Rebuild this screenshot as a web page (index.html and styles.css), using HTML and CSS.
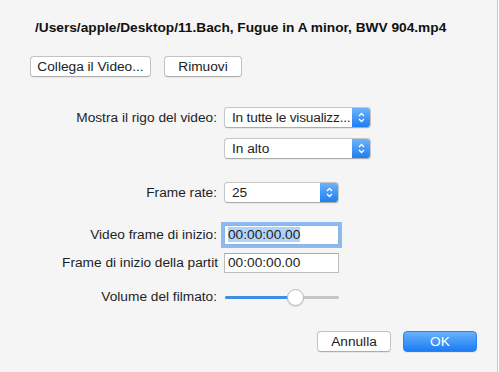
FILE: index.html
```html
<!DOCTYPE html>
<html lang="it">
  <head>
    <meta charset="UTF-8" />
    <meta name="viewport" content="width=device-width, initial-scale=1.0" />
    <title>Video</title>
    <link rel="stylesheet" href="styles.css">
  </head>
  <body>
    <div class="dialog">
      <div class="file-path">/Users/apple/Desktop/11.Bach, Fugue in A minor, BWV 904.mp4</div>

      <div class="top-actions">
        <button class="btn btn-link">Collega il Video...</button>
        <button class="btn btn-remove">Rimuovi</button>
      </div>

      <div class="form">
        <div class="row row-staff">
          <label class="label">Mostra il rigo del video:</label>
          <div class="popup popup-wide">
            <span class="popup-text popup-text-tight">In tutte le visualizz...</span>
            <span class="stepper">
              <svg width="7" height="11" viewBox="0 0 7 11"><path d="M1 4 L3.5 1.5 L6 4 M1 7 L3.5 9.5 L6 7" fill="none" stroke="#fff" stroke-width="1.3"/></svg>
            </span>
          </div>
        </div>

        <div class="row row-position">
          <span class="label"></span>
          <div class="popup popup-wide">
            <span class="popup-text">In alto</span>
            <span class="stepper">
              <svg width="7" height="11" viewBox="0 0 7 11"><path d="M1 4 L3.5 1.5 L6 4 M1 7 L3.5 9.5 L6 7" fill="none" stroke="#fff" stroke-width="1.3"/></svg>
            </span>
          </div>
        </div>

        <div class="row row-rate">
          <label class="label">Frame rate:</label>
          <div class="popup popup-narrow">
            <span class="popup-text">25</span>
            <span class="stepper">
              <svg width="7" height="11" viewBox="0 0 7 11"><path d="M1 4 L3.5 1.5 L6 4 M1 7 L3.5 9.5 L6 7" fill="none" stroke="#fff" stroke-width="1.3"/></svg>
            </span>
          </div>
        </div>

        <div class="row row-start">
          <label class="label">Video frame di inizio:</label>
          <div class="field field-focus"><span class="selected">00:00:00.00</span></div>
        </div>

        <div class="row row-score">
          <label class="label label-score">Frame di inizio della partit</label>
          <div class="field">00:00:00.00</div>
        </div>

        <div class="row row-volume">
          <label class="label">Volume del filmato:</label>
          <div class="slider">
            <div class="slider-fill" style="width: 61%"></div>
            <div class="slider-knob" style="left: 61%"></div>
          </div>
        </div>
      </div>

      <div class="footer">
        <button class="btn btn-cancel">Annulla</button>
        <button class="btn btn-ok">OK</button>
      </div>
    </div>
  </body>
</html>
```

FILE: styles.css
```css
* {
  margin: 0;
  padding: 0;
  box-sizing: border-box;
}

body {
  font-family: "Liberation Sans", Arial, sans-serif;
  font-size: 13.7px;
  color: #1e1e1e;
  background: #ffffff;
}

.dialog {
  width: 498px;
  height: 372px;
  background: #f5f5f5;
  border-right: 1px solid #c9c9c9;
  padding-top: 20px;
}

.file-path {
  padding-left: 35px;
  font-weight: 700;
  line-height: 16px;
  color: #111;
}

/* Push buttons */
.btn {
  font-family: inherit;
  font-size: 13.7px;
  height: 21px;
  line-height: 19px;
  background: #ffffff;
  color: #222;
  border: 1px solid #c3c3c3;
  border-bottom-color: #adadad;
  border-radius: 4px;
  box-shadow: 0 0.5px 1px rgba(0, 0, 0, 0.06);
  text-align: center;
}

.top-actions {
  display: flex;
  gap: 13px;
  margin-top: 20px;
  padding-left: 30px;
}

.btn-link {
  width: 121px;
}

.btn-remove {
  width: 78px;
}

/* Form rows */
.form {
  margin-top: 30px;
}

.row {
  display: flex;
  align-items: center;
}

.label {
  width: 158px;
  margin-left: 60px;
  margin-right: 6px;
  padding-right: 1px;
  text-align: right;
  white-space: nowrap;
  line-height: 16px;
}

.label-score {
  padding-right: 0;
}

.row-position {
  margin-top: 10px;
}

.row-rate {
  margin-top: 23px;
}

.row-start {
  margin-top: 22px;
}

.row-score {
  margin-top: 8px;
}

.row-volume {
  margin-top: 14px;
  height: 20px;
}

/* Popup buttons */
.popup {
  display: flex;
  align-items: stretch;
  height: 21px;
  background: #ffffff;
  border: 1px solid #c6c6c6;
  border-bottom-color: #acacac;
  border-radius: 4px;
  overflow: hidden;
  box-shadow: 0 0.5px 1px rgba(0, 0, 0, 0.06);
}

.popup-wide {
  width: 147px;
}

.popup-narrow {
  width: 115px;
}

.popup-text {
  flex: 1;
  padding-left: 7px;
  line-height: 19px;
  white-space: nowrap;
}

.popup-text-tight {
  letter-spacing: -0.2px;
}

.stepper {
  width: 18px;
  display: flex;
  align-items: center;
  justify-content: center;
  background: linear-gradient(#6cb3fa, #1f7ef2);
}

/* Text fields */
.field {
  width: 115px;
  height: 20px;
  background: #ffffff;
  border: 1px solid #bdbdbd;
  border-top-color: #a9a9a9;
  padding-left: 3px;
  line-height: 18px;
}

.field-focus {
  border-color: #8fb3e0;
  box-shadow: 0 0 0 3px #8cbaf2;
}

.selected {
  background: #b2d3f9;
}

/* Volume slider */
.slider {
  position: relative;
  width: 114px;
  height: 3px;
  margin-left: 1px;
  background: #c6c6c6;
  border-radius: 2px;
}

.slider-fill {
  height: 3px;
  background: #3f8ee6;
  border-radius: 2px;
}

.slider-knob {
  position: absolute;
  top: -7px;
  width: 17px;
  height: 17px;
  margin-left: -8px;
  background: #ffffff;
  border: 1px solid #b9b9b9;
  border-radius: 50%;
  box-shadow: 0 1px 1px rgba(0, 0, 0, 0.12);
}

/* Footer */
.footer {
  display: flex;
  justify-content: flex-end;
  gap: 12px;
  margin-top: 24px;
  padding-right: 20px;
}

.btn-cancel {
  width: 74px;
}

.btn-ok {
  width: 74px;
  color: #ffffff;
  border: 1px solid #2a82f0;
  background: linear-gradient(#69b1fb, #1b7df4);
}
```
